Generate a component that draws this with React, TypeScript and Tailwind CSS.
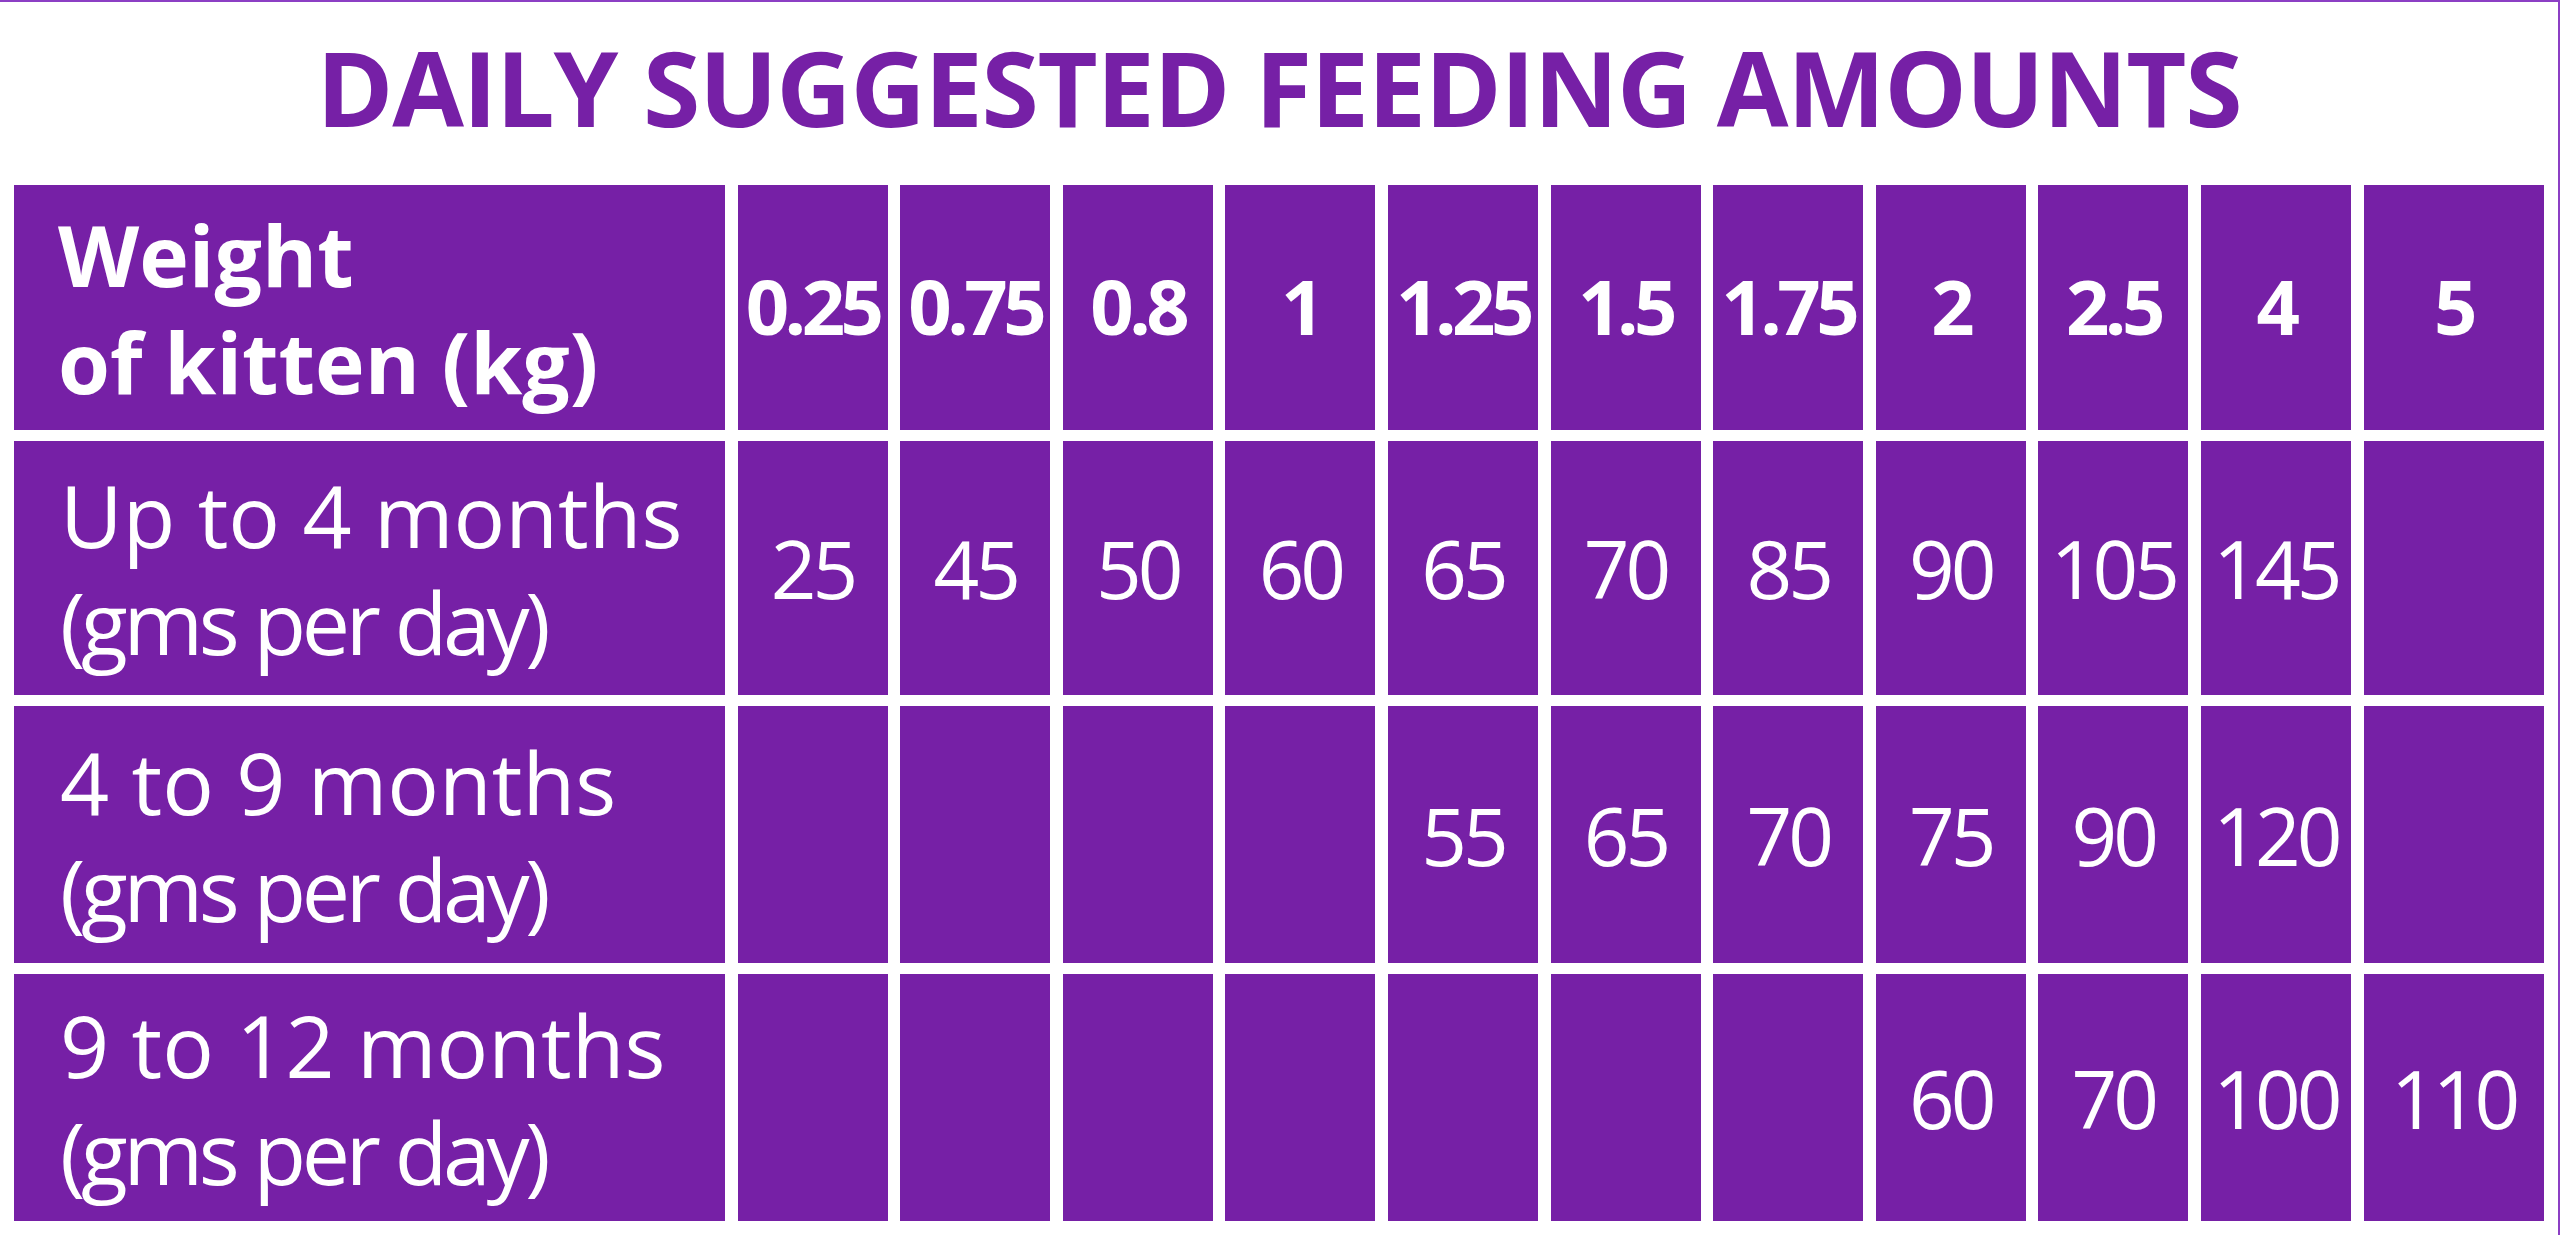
import React from 'react';

const WEIGHTS = ['0.25', '0.75', '0.8', '1', '1.25', '1.5', '1.75', '2', '2.5', '4', '5'];

const ROWS = [
  { label: 'Up to 4 months', values: ['25', '45', '50', '60', '65', '70', '85', '90', '105', '145', ''] },
  { label: '4 to 9 months', values: ['', '', '', '', '55', '65', '70', '75', '90', '120', ''] },
  { label: '9 to 12 months', values: ['', '', '', '', '', '', '', '60', '70', '100', '110'] },
];

export default function App() {
  return (
    <div
      className="w-[2560px] h-[1235px] bg-white border-t-2 border-r-2 border-[#8c3fc4] overflow-hidden"
      style={{ fontFamily: '"Open Sans", "Noto Sans", sans-serif' }}
    >
      <div className="h-[183px] flex items-center justify-center pb-[14px]">
        <h1 className="text-[104px] font-bold leading-none text-[#7620a6] tracking-[-0.012em]">
          DAILY SUGGESTED FEEDING AMOUNTS
        </h1>
      </div>

      <div className="pl-[14px] grid grid-cols-[711px_repeat(10,150px)_180px] grid-rows-[245px_254px_257px_247px] gap-x-[12.6px] gap-y-[11px] text-white">
        {/* header row */}
        <div className="bg-[#7620a6] flex flex-col justify-center pl-[44px] text-[84px] font-bold leading-[107px]">
          <span>Weight</span>
          <span>of kitten (kg)</span>
        </div>
        {WEIGHTS.map((w) => (
          <div
            key={w}
            className="bg-[#7620a6] flex items-center justify-center text-[76px] font-bold tracking-[-0.06em] leading-none pb-[4px]"
          >
            {w}
          </div>
        ))}

        {ROWS.map((row) => (
          <React.Fragment key={row.label}>
            <div className="bg-[#7620a6] flex flex-col justify-center pl-[46px] text-[86px] leading-[107px]">
              <span>{row.label}</span>
              <span className="tracking-[-0.05em]">(gms per day)</span>
            </div>
            {row.values.map((v, i) => (
              <div
                key={i}
                className="bg-[#7620a6] flex items-center justify-center text-[80px] tracking-[-0.05em] leading-none"
              >
                {v}
              </div>
            ))}
          </React.Fragment>
        ))}
      </div>
    </div>
  );
}
